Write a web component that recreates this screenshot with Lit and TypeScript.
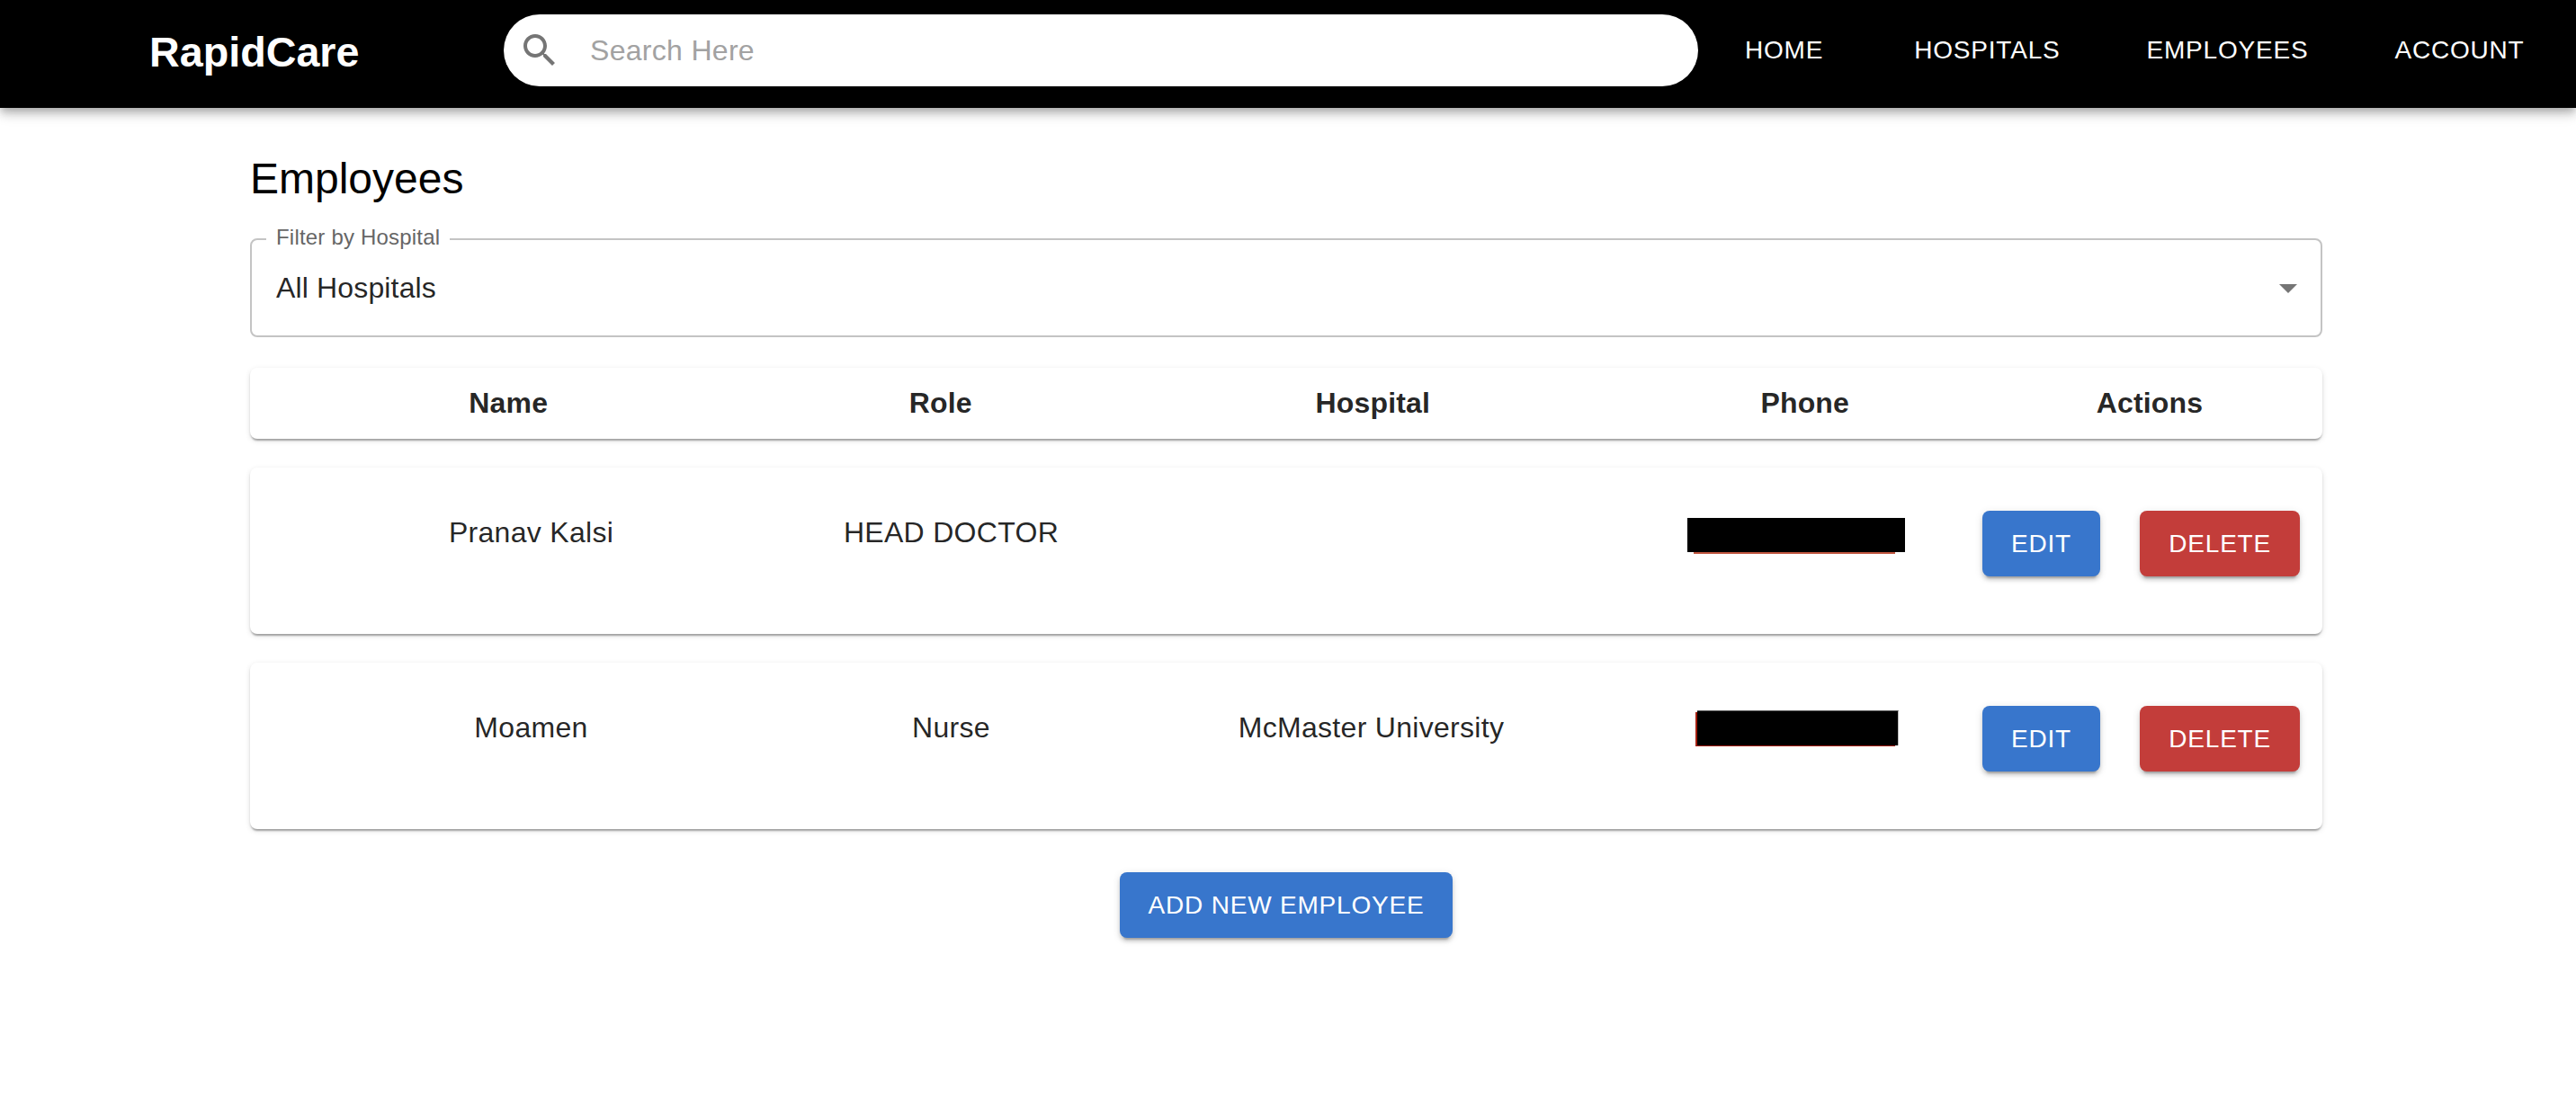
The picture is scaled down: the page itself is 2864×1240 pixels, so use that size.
import { LitElement, html, css, svg } from 'lit';
import { customElement } from 'lit/decorators.js';

const searchIcon = svg`<path d="M15.5 14h-.79l-.28-.27C15.41 12.59 16 11.11 16 9.5 16 5.91 13.09 3 9.5 3S3 5.91 3 9.5 5.91 16 9.5 16c1.61 0 3.09-.59 4.23-1.57l.27.28v.79l5 4.99L20.49 19l-4.99-5zm-6 0C7.01 14 5 11.99 5 9.5S7.01 5 9.5 5 14 7.01 14 9.5 11.99 14 9.5 14z"/>`;
const arrowIcon = svg`<path d="M7 10l5 5 5-5z"/>`;

const NAV_LINKS = ['Home', 'Hospitals', 'Employees', 'Account'];
const COLUMNS = ['Name', 'Role', 'Hospital', 'Phone', 'Actions'];

const EMPLOYEES = [
  { name: 'Pranav Kalsi', role: 'HEAD DOCTOR', hospital: '', redact: 'redact redact--first' },
  { name: 'Moamen', role: 'Nurse', hospital: 'McMaster University', redact: 'redact redact--second' },
];

@customElement('app-root')
export class AppRoot extends LitElement {
  static styles = css`
    :host {
      display: block;
      min-height: 1240px;
      background: #fff;
      font-family: 'Liberation Sans', Arial, sans-serif;
      color: rgba(0, 0, 0, 0.87);
    }

    /* Top bar */
    .nav {
      position: relative;
      display: flex;
      align-items: center;
      box-sizing: border-box;
      height: 120px;
      padding: 0 59px 8px 166px;
      background: #000;
      box-shadow: 0 4px 8px -2px rgba(0, 0, 0, 0.2), 0 8px 10px 0 rgba(0, 0, 0, 0.14), 0 2px 20px 0 rgba(0, 0, 0, 0.12);
    }

    .nav__logo {
      flex: 0 0 394px;
      padding-top: 4px;
      font-size: 46.7px;
      font-weight: 700;
      color: #fff;
    }

    .nav__search {
      flex: 0 0 1328px;
      display: flex;
      align-items: center;
      box-sizing: border-box;
      height: 80px;
      padding-left: 16px;
      gap: 32px;
      border-radius: 40px;
      background: #fff;
      font-size: 32px;
      letter-spacing: 0.3px;
      color: #a2a2a2;
    }

    .nav__search svg {
      width: 48px;
      height: 48px;
      fill: #757575;
    }

    .nav__links {
      display: flex;
      gap: 96px;
      margin-left: 52px;
    }

    .nav__link {
      font-size: 28px;
      letter-spacing: 0.8px;
      text-transform: uppercase;
      color: #fff;
    }

    .nav__link:first-child {
      margin-right: 5px;
    }

    /* Page content */
    .page {
      padding: 47px 282px 0 278px;
    }

    .page__title {
      margin: 0 0 34px;
      font-size: 48px;
      font-weight: 400;
      line-height: 64px;
      color: #000;
    }

    .filter {
      position: relative;
      display: flex;
      align-items: center;
      box-sizing: border-box;
      height: 110px;
      padding: 0 27px;
      border: 2px solid #c4c4c4;
      border-radius: 8px;
      font-size: 32px;
      letter-spacing: 0.15px;
    }

    .filter__label {
      position: absolute;
      top: -15px;
      left: 16px;
      padding: 0 11px;
      background: #fff;
      font-size: 24px;
      line-height: 24px;
      letter-spacing: 0.2px;
      color: #666;
    }

    .filter__arrow {
      position: absolute;
      top: 29px;
      right: 12px;
      width: 48px;
      height: 48px;
      fill: #757575;
    }

    .card {
      border-radius: 8px;
      background: #fff;
      box-shadow: 0 4px 2px -2px rgba(0, 0, 0, 0.2), 0 2px 2px 0 rgba(0, 0, 0, 0.14), 0 2px 6px 0 rgba(0, 0, 0, 0.12);
    }

    .head {
      display: grid;
      grid-template-columns: repeat(4, 1fr) 286px;
      align-items: center;
      box-sizing: border-box;
      height: 79px;
      margin: 34px 0 32px;
      padding: 0 49px 0 47px;
      text-align: center;
      font-size: 32px;
      font-weight: 700;
      letter-spacing: 0.15px;
    }

    .row {
      display: grid;
      grid-template-columns: 467px 467px 467px 446px 1fr;
      align-items: start;
      box-sizing: border-box;
      height: 185px;
      margin-bottom: 32px;
      padding: 48px 25px 0 79px;
      text-align: center;
      font-size: 32px;
      line-height: 48px;
      letter-spacing: 0.3px;
    }

    .row__phone {
      padding-left: 32px;
    }

    .row__actions {
      display: flex;
      justify-content: space-between;
    }

    /* Blacked out phone numbers, with the red edge that shows around them */
    .redact {
      display: block;
      position: relative;
      box-sizing: border-box;
      background: #000;
    }

    .redact::after {
      content: '';
      position: absolute;
      box-sizing: border-box;
    }

    .redact--first {
      width: 242px;
      height: 38px;
      margin: 8px auto 0;
    }

    .redact--first::after {
      left: 7px;
      right: 11px;
      bottom: -2px;
      height: 2px;
      background: #c0563f;
    }

    .redact--second {
      width: 224px;
      height: 39px;
      margin: 5px 0 0 97px;
      border-top: 1px solid #555;
      border-right: 1px solid #bbb;
    }

    .redact--second::after {
      left: -2px;
      right: 3px;
      top: 1px;
      bottom: -1px;
      border-left: 2px solid #a32010;
      border-bottom: 1px solid #a32010;
    }

    /* Buttons */
    .btn {
      box-sizing: border-box;
      height: 73px;
      padding: 0 32px;
      border: 0;
      border-radius: 8px;
      font-family: inherit;
      font-size: 28px;
      letter-spacing: 0.8px;
      text-transform: uppercase;
      color: #fff;
      box-shadow: 0 6px 2px -4px rgba(0, 0, 0, 0.2), 0 4px 4px 0 rgba(0, 0, 0, 0.14), 0 2px 10px 0 rgba(0, 0, 0, 0.12);
    }

    .btn--blue {
      background: #3876cc;
    }

    .btn--red {
      background: #c33d3a;
    }

    .page__footer {
      display: flex;
      justify-content: center;
      margin-top: 48px;
    }
  `;

  renderRow(emp: (typeof EMPLOYEES)[number]) {
    return html`
      <div class="card row">
        <div>${emp.name}</div>
        <div>${emp.role}</div>
        <div>${emp.hospital}</div>
        <div class="row__phone"><span class="${emp.redact}"></span></div>
        <div class="row__actions">
          <button class="btn btn--blue">Edit</button>
          <button class="btn btn--red">Delete</button>
        </div>
      </div>
    `;
  }

  render() {
    return html`
      <header class="nav">
        <div class="nav__logo">RapidCare</div>
        <div class="nav__search">
          <svg viewBox="0 0 24 24">${searchIcon}</svg>
          <span>Search Here</span>
        </div>
        <nav class="nav__links">
          ${NAV_LINKS.map((link) => html`<span class="nav__link">${link}</span>`)}
        </nav>
      </header>

      <main class="page">
        <h1 class="page__title">Employees</h1>

        <div class="filter">
          <span class="filter__label">Filter by Hospital</span>
          All Hospitals
          <svg class="filter__arrow" viewBox="0 0 24 24">${arrowIcon}</svg>
        </div>

        <div class="card head">
          ${COLUMNS.map((col) => html`<div>${col}</div>`)}
        </div>

        ${EMPLOYEES.map((emp) => this.renderRow(emp))}

        <div class="page__footer">
          <button class="btn btn--blue">Add New Employee</button>
        </div>
      </main>
    `;
  }
}
